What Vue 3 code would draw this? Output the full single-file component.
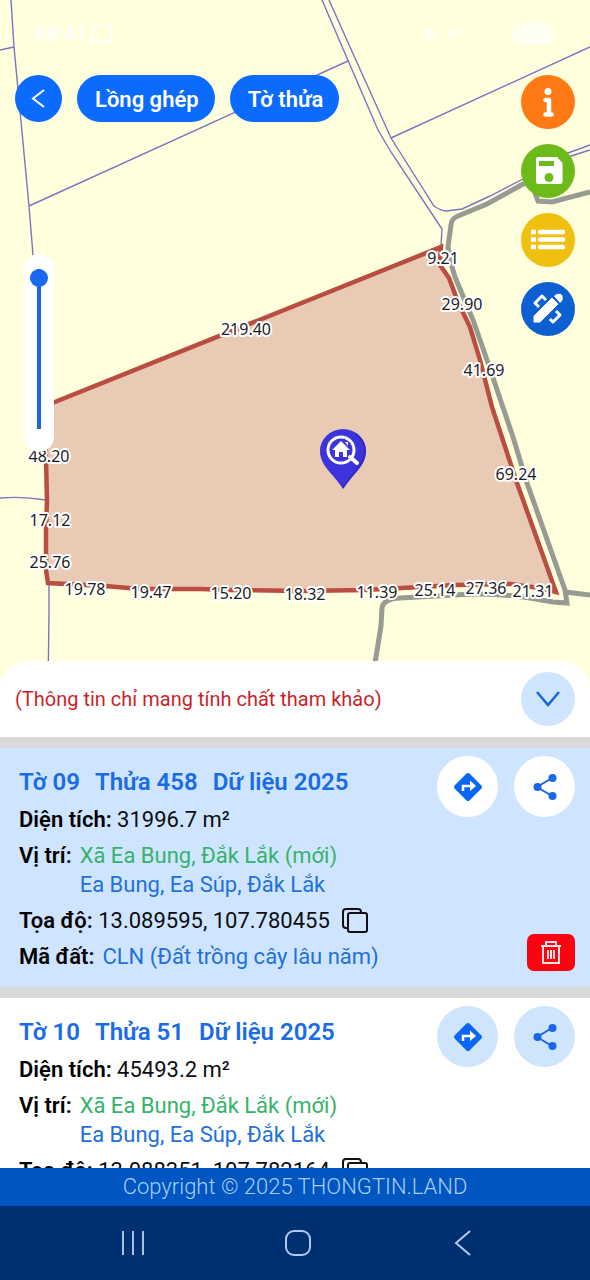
<script setup>
import { ref } from 'vue'

const opacity = ref(100)

const parcels = [
  { sheet: 'Tờ 09', plot: 'Thửa 458', data: 'Dữ liệu 2025', area: '31996.7 m²', newPlace: 'Xã Ea Bung, Đắk Lắk (mới)', oldPlace: 'Ea Bung, Ea Súp, Đắk Lắk', coords: '13.089595, 107.780455', land: 'CLN (Đất trồng cây lâu năm)', active: true },
  { sheet: 'Tờ 10', plot: 'Thửa 51', data: 'Dữ liệu 2025', area: '45493.2 m²', newPlace: 'Xã Ea Bung, Đắk Lắk (mới)', oldPlace: 'Ea Bung, Ea Súp, Đắk Lắk', coords: '13.088351, 107.782164', land: 'CLN (Đất trồng cây lâu năm)', active: false },
]

const edges = [
  ['219.40', 246, 335], ['9.21', 443, 264], ['29.90', 462, 310], ['41.69', 484, 376],
  ['69.24', 516, 480], ['48.20', 49, 462], ['17.12', 50, 526], ['25.76', 50, 568],
  ['19.78', 85, 595], ['19.47', 151, 598], ['15.20', 231, 599], ['18.32', 305, 600],
  ['11.39', 377, 598], ['25.14', 435, 596], ['27.36', 486, 594], ['21.31', 533, 597],
]
</script>

<template>
  <main class="app">
    <section class="map" aria-label="Bản đồ">
      <svg class="canvas" viewBox="0 0 590 690" preserveAspectRatio="xMidYMin slice">
        <g class="boundary">
          <path d="M11 0 14 47 29 206 33 255 45 406M0 50 14 47M29 206 348 61" />
          <path d="M322 0 350 65 378 130 391 152 442 229 441 246" />
          <path d="M329 0 350 47 391 138 434 206Q439 210 446 211L462 209 490 196 523 179 568 153 590 145M391 138 590 47M523 184 571 156 590 150" />
          <path d="M0 498Q22 496 46 500M49 584 49 615 48 690" />
        </g>
        <g class="road">
          <path d="M525 183 487 204 458 216Q451 219 451 225L448 247Q450 262 455 277L473 320 487 360 513 437 527 483 565 590 567 603 553 602 530 598Q490 592 455 595L400 598Q383 599 382 608L381 626 375 663" />
          <path d="M534 190 538 201 552 202 590 192M565 592 590 595" />
        </g>
        <path class="parcel" d="M441 247 440 265 449 278 458 302 470 327 480 360 492 407 517 483 556 592 540 588 510 584 455 585 420 587 365 590 300 591 230 590 200 589 140 589 105 586 48 583 46 570 46 530 47 500 46 460 45 406Z" />
        <g class="length">
          <text v-for="e in edges" :key="e[0]" :x="e[1]" :y="e[2]">{{ e[0] }}</text>
        </g>
        <path fill="#3d33dc" d="M343 489C333 473 320 466 320 451A23 22 0 0 1 366 451C366 466 353 473 343 489Z" />
        <path fill="none" stroke="#2b20b4" stroke-width="2" opacity=".6" d="M343 488C352 473 365 466 365 451A23 22 0 0 0 356 434" />
        <circle cx="341" cy="450" r="13" fill="none" stroke="#fff" stroke-width="3" />
        <path d="M350 457 357 463" stroke="#fff" stroke-width="4" stroke-linecap="round" />
        <path fill="#fff" d="M341 441 350 450 347 450 347 457 343 457 343 452 339 452 339 457 335 457 335 450 332 450ZM345 442H348V446Z" />
      </svg>

      <div class="overlay">
        <div class="status">
          <span>08:41</span>
          <svg width="26" height="22" viewBox="0 0 26 22" fill="none" stroke="#fffffa" stroke-width="2"><path d="M9 2 3 20M10 2H24V19H6" /></svg>
          <svg class="signal" width="42" height="16" viewBox="0 0 42 16" fill="#fffff2"><circle cx="8" cy="8" r="6" /><circle cx="32" cy="8" r="5" /></svg>
          <svg width="44" height="24" viewBox="0 0 44 24" fill="#fffff2"><rect x="1" y="1" width="42" height="22" rx="11" /></svg>
        </div>
        <div class="controls">
          <div class="left">
            <nav class="pills">
              <button class="back" aria-label="Quay lại">
                <svg width="24" height="24" viewBox="0 0 24 24" fill="none" stroke="#fff" stroke-width="2"><path d="M17 3 6 11.500 17 20" /></svg>
              </button>
              <button class="pill">Lồng ghép</button>
              <button class="pill">Tờ thửa</button>
            </nav>
            <label class="slider">
              <input v-model="opacity" type="range" min="0" max="100" aria-label="Độ mờ" />
            </label>
          </div>
          <nav class="tools">
            <button class="tool orange" aria-label="Thông tin">
              <svg viewBox="0 0 54 54"><circle cx="27" cy="16.500" r="3.500" fill="#fff" /><path d="M24.500 25H28V39M24.500 39.500H30.500" fill="none" stroke="#fff" stroke-width="4.500" stroke-linecap="round" stroke-linejoin="round" /></svg>
            </button>
            <button class="tool green" aria-label="Lưu">
              <svg viewBox="0 0 54 54"><path fill="#fff" fill-rule="evenodd" d="M17 13H36L41.500 19V38Q41.500 40 39 40H17Q15 40 15 38V15Q15 13 17 13ZM18 17V22H33V17ZM28 29A4.500 4.500 0 1 0 28 38 4.500 4.500 0 1 0 28 29Z" /></svg>
            </button>
            <button class="tool yellow" aria-label="Danh sách">
              <svg viewBox="0 0 54 54" stroke="#fff" stroke-width="4.500"><path d="M10 19H15M10 26.500H15M10 34H15" /><path stroke-linecap="round" d="M19 19H42M19 26.500H42M19 34H42" /></svg>
            </button>
            <button class="tool blue" aria-label="Đo vẽ">
              <svg viewBox="0 0 54 54"><path fill="#fff" stroke="#fff" stroke-linejoin="round" d="M13 40V34L31 16 37 22 19 40Z" /><path fill="#fff" d="M33 14Q36 11 40 12 43 15 41 19L39 21Z" /><path fill="none" stroke="#fff" stroke-width="3" stroke-linejoin="round" d="M18 25 14 21 21 14 25 18M29 37 32 40 39 33 35 29" /></svg>
            </button>
          </nav>
        </div>
      </div>
    </section>

    <section class="sheet">
      <header class="sheet-head">
        <p>(Thông tin chỉ mang tính chất tham khảo)</p>
        <button class="collapse" aria-label="Thu gọn">
          <svg width="26" height="20" viewBox="0 0 26 20" fill="none" stroke="#1a66de" stroke-width="2.500"><path d="M2 3 13 16 24 3" /></svg>
        </button>
      </header>

      <article v-for="p in parcels" :key="p.plot" class="card" :class="{ active: p.active }">
        <div class="info">
          <h2><span>{{ p.sheet }}</span><span>{{ p.plot }}</span><span>{{ p.data }}</span></h2>
          <p><b>Diện tích:</b> {{ p.area }}</p>
          <div class="pair">
            <b>Vị trí:</b>
            <div><div class="new">{{ p.newPlace }}</div><div class="link">{{ p.oldPlace }}</div></div>
          </div>
          <div class="coords">
            <p><b>Tọa độ:</b> {{ p.coords }}</p>
            <button class="copy" aria-label="Sao chép">
              <svg width="26" height="26" viewBox="0 0 26 26" fill="none" stroke="#111" stroke-width="2"><rect x="6" y="5" width="19" height="19" rx="2" /><path d="M6 20H4Q1 20 1 17V4Q1 1 4 1H16Q19 1 19 4V5" /></svg>
            </button>
          </div>
          <div class="pair"><b>Mã đất:</b><span class="link">{{ p.land }}</span></div>
        </div>
        <div class="side">
          <div class="actions">
            <button class="round" aria-label="Chỉ đường">
              <svg width="30" height="30" viewBox="0 0 30 30"><path fill="#0c66f5" d="M13.500 1.600Q15 .2 16.500 1.600L28.400 13.500Q29.800 15 28.400 16.500L16.500 28.400Q15 29.800 13.500 28.400L1.600 16.500Q.2 15 1.600 13.500Z" /><path fill="none" stroke="#fff" stroke-width="2.500" d="M10 19V14H19" /><path fill="#fff" d="M17 8.500 23 14 17 19Z" /></svg>
            </button>
            <button class="round" aria-label="Chia sẻ">
              <svg width="30" height="30" viewBox="0 0 30 30" fill="#1a66e8"><path d="M22 6 7 15 22 24" fill="none" stroke="#1a66e8" stroke-width="2" /><circle cx="22.500" cy="6" r="4" /><circle cx="7.500" cy="15" r="4" /><circle cx="22.500" cy="24" r="4" /></svg>
            </button>
          </div>
          <button v-if="p.active" class="delete" aria-label="Xóa">
            <svg width="22" height="26" viewBox="0 0 22 26" fill="none" stroke="#ffe3e3" stroke-width="2"><path d="M1 6H21M6 6V2H16V6M3 6V23H19V6M8 10V19M11 10V19M14 10V19" /></svg>
          </button>
        </div>
      </article>
    </section>

    <footer class="copyright">Copyright © 2025 THONGTIN.LAND</footer>
    <nav class="system">
      <button aria-label="Gần đây"><svg width="30" height="30" viewBox="0 0 30 30" fill="none" stroke="#a9bfe6" stroke-width="2"><path d="M5 3V27M15 3V27M25 3V27" /></svg></button>
      <button aria-label="Trang chủ"><svg width="30" height="30" viewBox="0 0 30 30" fill="none" stroke="#b4c8ee" stroke-width="2"><rect x="3" y="3" width="24" height="24" rx="8" /></svg></button>
      <button aria-label="Trở về"><svg width="30" height="30" viewBox="0 0 30 30" fill="none" stroke="#b4c8ee" stroke-width="2"><path d="M22 3 8 15 22 27" /></svg></button>
    </nav>
  </main>
</template>

<style>
body { margin: 0; }
</style>

<style scoped>
.app {
  display: flex;
  flex-direction: column;
  height: 100vh;
  overflow: hidden;
  font-family: Roboto, "Noto Sans", sans-serif;
  font-size: 22px;
  line-height: 29px;
  color: #0b0d12;
}
button {
  display: flex;
  align-items: center;
  justify-content: center;
  padding: 0;
  border: 0;
  background: none;
  font: inherit;
  cursor: pointer;
}
p, h2 { margin: 0; }
b { font-weight: 600; color: #000; }

.map {
  position: relative;
  flex: none;
  width: 100%;
  aspect-ratio: 59 / 69;
  background: #ffffdd;
}
.canvas { display: block; width: 100%; height: 100%; }
.boundary path { fill: none; stroke: #7a74c4; stroke-width: 1.4; }
.road path { fill: none; stroke: #979b92; stroke-width: 5; }
.parcel { fill: #e9cab5; stroke: #b94d42; stroke-width: 4.5; }
.length text {
  font-family: "Noto Sans", sans-serif;
  font-size: 16px;
  text-anchor: middle;
  fill: #1b1d24;
  stroke: #fff;
  stroke-width: 4px;
  stroke-linejoin: round;
  paint-order: stroke;
}

.overlay { position: absolute; inset: 0; }
.status {
  display: flex;
  align-items: center;
  height: 67px;
  padding: 0 35px;
  color: #fffffa;
  font-size: 20px;
  font-weight: 700;
}
.signal { margin-left: auto; margin-right: 48px; }
.controls {
  display: flex;
  justify-content: space-between;
  padding: 8px 15px;
}
.pills { display: flex; gap: 15px; }
.back, .pill {
  height: 47px;
  border-radius: 24px;
  background: #0b6bff;
  color: #fff;
  font-weight: 600;
}
.back { width: 47px; }
.pill { padding: 2px 16px 0 18px; }
.slider {
  display: flex;
  justify-content: center;
  box-sizing: border-box;
  width: 30px;
  height: 198px;
  margin: 132px 0 0 9px;
  padding: 15px 0 23px;
  border-radius: 15px;
  background: #fff;
}
.slider input {
  appearance: none;
  writing-mode: vertical-lr;
  direction: rtl;
  width: 18px;
  height: 160px;
  margin: 0;
  background: linear-gradient(#1b66dc, #1b66dc) center / 4px 100% no-repeat;
}
.slider input::-webkit-slider-thumb {
  appearance: none;
  width: 18px;
  height: 18px;
  border-radius: 50%;
  background: #1769ef;
}
.tools { display: flex; flex-direction: column; gap: 15px; }
.tool { width: 54px; height: 54px; border-radius: 50%; }
.tool svg { width: 54px; height: 54px; }
.orange { background: #ff7a14; }
.green { background: #6dbb1a; }
.yellow { background: #f0c011; }
.blue { background: #0d60d2; }

.sheet {
  position: relative;
  flex: 1;
  min-height: 0;
  margin-top: -29px;
  overflow: hidden;
  border-radius: 28px 28px 0 0;
  background: #fff;
}
.sheet-head {
  display: flex;
  align-items: center;
  justify-content: space-between;
  height: 76px;
  padding: 0 15px;
  color: #cb1f2b;
  font-size: 20px;
}
.collapse { width: 54px; height: 54px; border-radius: 50%; background: #cfe5fd; }

.card {
  display: flex;
  justify-content: space-between;
  border-top: 11px solid #d9d9d9;
  background: #fff;
}
.card.active { background: #cfe5ff; }
.info {
  display: flex;
  flex-direction: column;
  gap: 7px;
  padding: 20px 0 16px 19px;
}
h2 {
  display: flex;
  gap: 15px;
  margin-bottom: 1px;
  color: #1a6be6;
  font-size: 24px;
  font-weight: 600;
  line-height: 29px;
}
.pair { display: flex; gap: 8px; }
.new { color: #36b26a; }
.link { color: #2170dc; }
.coords { display: flex; align-items: center; gap: 12px; height: 29px; }
.copy svg { display: block; }
.side {
  display: flex;
  flex-direction: column;
  align-items: flex-end;
  justify-content: space-between;
  padding: 8px 15px 16px 0;
}
.actions { display: flex; gap: 16px; }
.round { width: 61px; height: 61px; border-radius: 50%; background: #cfe5fb; }
.active .round { background: #fff; }
.delete { width: 48px; height: 37px; border-radius: 7px; background: #fb0310; }

.copyright {
  flex: none;
  height: 38px;
  background: #0056c0;
  color: #a9cdf8;
  font-size: 22px;
  font-weight: 300;
  line-height: 38px;
  text-align: center;
}
.system {
  display: flex;
  flex: none;
  align-items: center;
  justify-content: space-between;
  height: 74px;
  padding: 0 19% 0 20%;
  background: #003071;
}
</style>
